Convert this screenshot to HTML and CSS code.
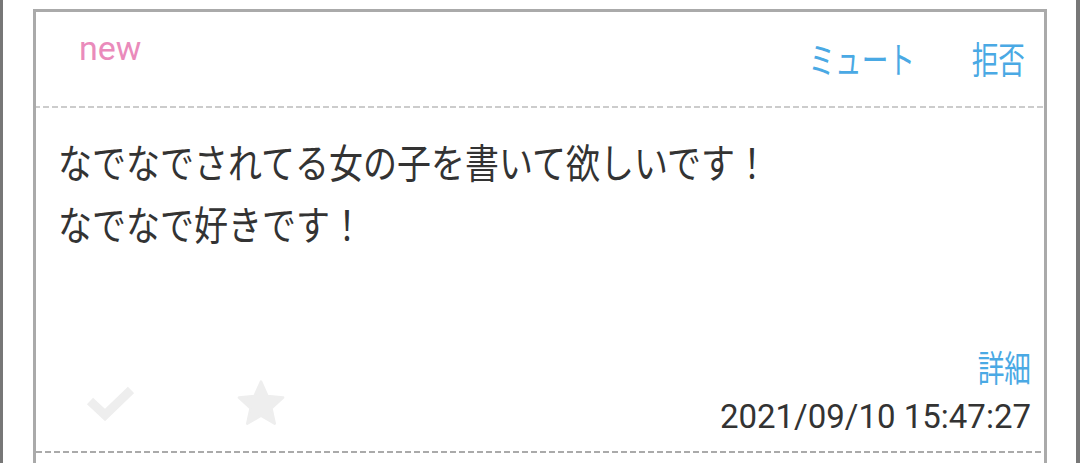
FILE: index.html
```html
<!DOCTYPE html>
<html lang="ja">
<head>
<meta charset="utf-8">
<link rel="stylesheet" href="styles.css">
</head>
<body>
<div class="frame">
  <div class="card">
    <div class="head">
      <span class="new">new</span>
      <div class="actions">
        <span class="link">ミュート</span>
        <span class="link">拒否</span>
      </div>
    </div>
    <div class="message">なでなでされてる女の子を書いて欲しいです！<br>なでなで好きです！</div>
    <div class="foot">
      <div class="icons">
        <svg class="check" width="48" height="36" viewBox="0 0 48 36"><path d="M4 16 L19 30 L45 5" fill="none" stroke="#eeeeee" stroke-width="9"/></svg>
        <svg class="star" width="50" height="48" viewBox="0 0 24 23"><path d="M12 1.2 L15.1 8.1 L22.6 8.9 L17 14 L18.6 21.4 L12 17.6 L5.4 21.4 L7 14 L1.4 8.9 L8.9 8.1 Z" fill="#eeeeee" stroke="#eeeeee" stroke-width="1.2" stroke-linejoin="round"/></svg>
      </div>
      <div class="meta">
        <span class="link detail">詳細</span>
        <span class="date">2021/09/10 15:47:27</span>
      </div>
    </div>
    <div class="sep"></div>
  </div>
</div>
</body>
</html>
```
FILE: styles.css
```css
html, body {
  margin: 0;
  padding: 0;
  background: #ffffff;
}
body {
  font-family: Roboto, "Noto Sans CJK JP", sans-serif;
}
.frame {
  height: 463px;
  border-left: 3px solid #777777;
  border-right: 4px solid #777777;
  box-sizing: border-box;
  padding: 9px 29px 0 30px;
  overflow: hidden;
}
.card {
  border: 3px solid #aaaaaa;
  border-bottom: none;
  height: 460px;
  box-sizing: border-box;
}
.head {
  height: 94px;
  display: flex;
  justify-content: space-between;
  align-items: flex-start;
  padding: 0 19px 0 43px;
  border-bottom: 2px dashed #cccccc;
  border-image: repeating-linear-gradient(90deg, #cccccc 0 6px, transparent 6px 9px) 2;
}
.new {
  color: #ea8bbb;
  font-size: 34px;
  margin-top: 16px;
}
.actions {
  display: flex;
  gap: 36px;
  margin-top: 24px;
}
.link {
  display: inline-block;
  color: #4aa9e4;
  font-family: "Noto Sans CJK JP", sans-serif;
  font-size: 37px;
  line-height: 44px;
  transform: scaleX(0.72);
  transform-origin: right center;
}
.message {
  padding: 22px 0 0 22px;
  height: 206px;
  box-sizing: border-box;
  font-family: "Noto Sans CJK JP", sans-serif;
  font-size: 40px;
  line-height: 62px;
  color: #333333;
  transform: scaleX(0.85);
  transform-origin: 22px 0;
}
.foot {
  display: flex;
  justify-content: space-between;
  align-items: flex-start;
  padding: 0 13px 0 50px;
  height: 137px;
}
.icons {
  display: flex;
  align-items: center;
  gap: 102px;
  height: 48px;
  margin-top: 65px;
}
.meta {
  display: flex;
  flex-direction: column;
  align-items: flex-end;
  margin-top: 32px;
}
.detail {
  font-size: 36px;
  line-height: 40px;
  transform: scaleX(0.74);
}
.date {
  font-size: 33px;
  color: #333333;
  line-height: 42px;
  margin-top: 10px;
}
.sep {
  height: 2px;
  background: repeating-linear-gradient(90deg, #aaaaaa 0 6px, transparent 6px 9px);
}
```
